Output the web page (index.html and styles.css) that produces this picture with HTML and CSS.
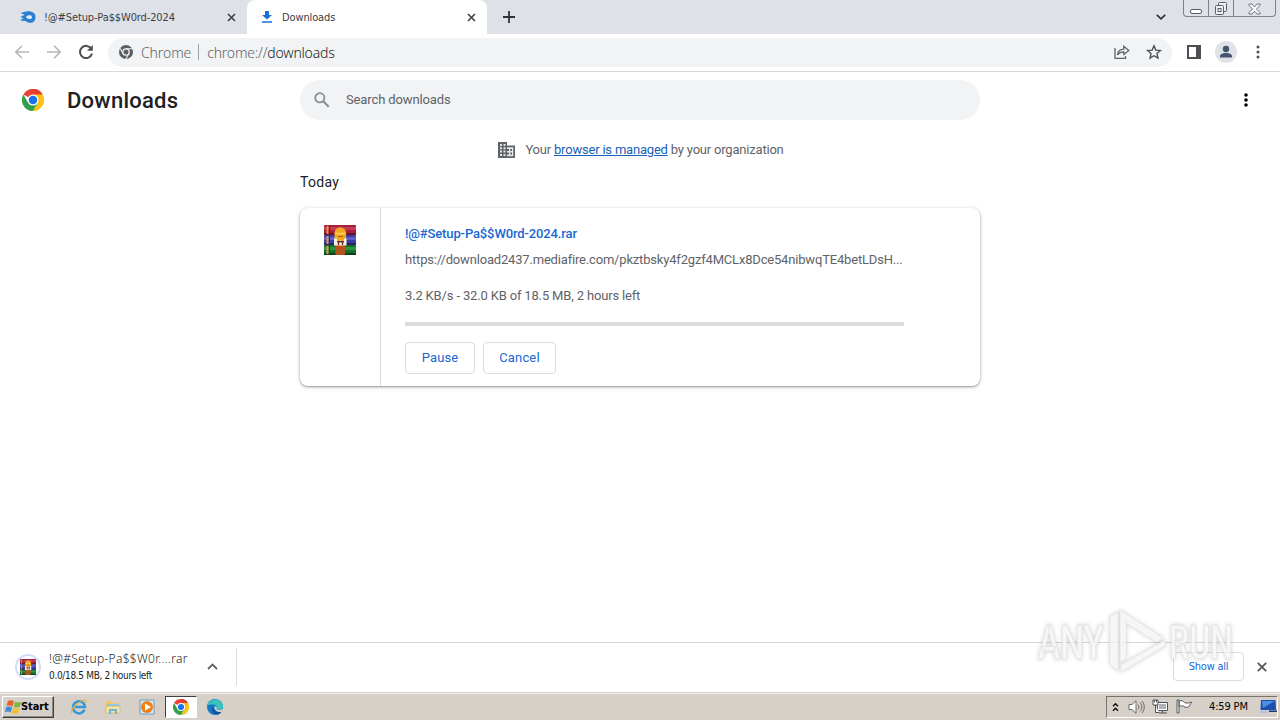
FILE: index.html
```html
<!DOCTYPE html>
<html lang="en">
<head>
    <meta charset="UTF-8">
    <meta name="viewport" content="width=device-width, initial-scale=1.0">
    <title>Downloads</title>
    <link rel="stylesheet" href="styles.css">
</head>
<body>
    <svg class="defs" width="0" height="0">
        <symbol id="chrome" viewBox="0 0 24 24">
            <path d="M12 12 1.6 6A12 12 0 0 1 22.4 6z" fill="#ea4335"/>
            <path d="M12 0a12 12 0 0 1 10.4 6H12z" fill="#e33b2e"/>
            <path d="M12 6h10.4A12 12 0 0 1 12 24l5.2-9z" fill="#fbc116"/>
            <path d="M1.6 6A12 12 0 0 0 12 24l5.2-9L12 12 6.8 15z" fill="#34a048"/>
            <circle cx="12" cy="12" r="6" fill="#fff"/>
            <circle cx="12" cy="12" r="4.6" fill="#1a73e8"/>
        </symbol>
        <symbol id="rar" viewBox="0 0 32 30">
            <rect x="0" y="0" width="32" height="10" rx="1" fill="#a91f3c"/>
            <rect x="0" y="2" width="32" height="3" fill="#c93a5a"/>
            <rect x="0" y="8" width="32" height="2" fill="#671329"/>
            <rect x="0" y="10" width="32" height="10" rx="1" fill="#3c3ca8"/>
            <rect x="0" y="12" width="32" height="3" fill="#5f5dca"/>
            <rect x="0" y="18" width="32" height="2" fill="#26235e"/>
            <rect x="0" y="20" width="32" height="10" rx="1" fill="#16702c"/>
            <rect x="0" y="22" width="32" height="3" fill="#2f9442"/>
            <rect x="0" y="28" width="32" height="2" fill="#0c4519"/>
            <path d="M3.500 1v8M3.500 11v8M3.500 21v8" stroke="#e09a3a" stroke-width="2"/>
            <path d="M5.500 1v28" stroke="#4b2a3c" stroke-width="1"/>
            <rect x="11.500" y="19" width="9.500" height="11" fill="#b4541b"/>
            <path d="M10.500 8a5.800 5.800 0 0 1 11.600 0v8H10.500z" fill="#f2a81d"/>
            <path d="M11 8.500h10.500" stroke="#ffd45a" stroke-width="1.500"/>
            <path d="M14 11.500h5" stroke="#a35c08" stroke-width="1"/>
            <path d="M10 13.500h3v4h7v-4h2.500v7H10z" fill="#f5f0e6"/>
            <path d="M14.500 16v4M18.500 16v4" stroke="#6c2b10" stroke-width="1.300"/>
        </symbol>
    </svg>

    <div class="window">
        <div class="tabstrip">
            <div class="tab">
                <svg class="tab-icon mediafire" width="16" height="12" viewBox="0 0 16 12"><path d="M1 2.500C4-.5 15.500-1.500 15.500 6S8 12.500 5.500 10C3 10 .5 9.500.3 8.200 2 8.500 3 8 3.500 7 2 7.200 1 6.500.6 5.500 3 5.500 3.500 4 4.500 3 3 3.300 2 3 1 2.500z" fill="#2b7fd0"/><path d="M6 6c1-2 6-2.500 6 .2S7.500 8.500 6 6z" fill="#dfeaf6"/></svg>
                <span class="tab-title first-title">!@#Setup-Pa$$W0rd-2024</span>
                <svg class="tab-close" width="9" height="9" viewBox="0 0 9 9"><path d="m1 1 7 7M8 1 1 8"/></svg>
            </div>
            <div class="tab active">
                <svg class="tab-icon" width="12" height="12" viewBox="0 0 12 12"><path d="M4 0h4v4h3L6 8.500 1 4h3zM1 10.300h10v1.500H1z" fill="#1a6fd8"/></svg>
                <span class="tab-title">Downloads</span>
                <svg class="tab-close" width="9" height="9" viewBox="0 0 9 9"><path d="m1 1 7 7M8 1 1 8"/></svg>
            </div>
            <svg class="new-tab" width="12" height="12" viewBox="0 0 12 12"><path d="M6 0v12M0 6h12" stroke="#2f3338" stroke-width="1.800"/></svg>
            <svg class="tab-search" width="10" height="6" viewBox="0 0 10 6"><path d="m.8.800 4.200 4 4.200-4" fill="none" stroke="#2f3338" stroke-width="1.700"/></svg>
            <div class="caption-buttons">
                <span class="cap-min"><svg width="14" height="6" viewBox="0 0 14 6"><rect x="1.500" y="1.500" width="11" height="4" rx="1.500" fill="#fff" stroke="#5a5f66"/></svg></span>
                <span class="cap-max"><svg width="14" height="14" viewBox="0 0 14 14" fill="#eef0f3" stroke="#5a5f66"><rect x="4.500" y=".5" width="8" height="9" rx="1"/><rect x="1.500" y="3.500" width="8" height="9" rx="1"/><rect x="4" y="6.500" width="3" height="3"/></svg></span>
                <span class="cap-close"><svg width="13" height="12" viewBox="0 0 13 12"><path d="M1 1h3l2.500 2.800L9 1h3v1.500L8.500 6 12 9.500V11H9L6.500 8.200 4 11H1V9.500L4.500 6 1 2.500z" fill="#f7f8fa" stroke="#63686f" stroke-width=".9"/></svg></span>
            </div>
        </div>

        <div class="toolbar">
            <svg class="nav-icon disabled" width="16" height="16" viewBox="0 0 16 16"><path d="M15 8H2M8 1.800 1.800 8 8 14.200"/></svg>
            <svg class="nav-icon disabled" width="16" height="16" viewBox="0 0 16 16"><path d="M1 8h13M8 1.800 14.200 8 8 14.200"/></svg>
            <svg class="nav-icon" width="16" height="16" viewBox="0 0 16 16"><path d="M13.300 4.800A6.100 6.100 0 1 0 14 9.500" stroke-width="2"/><path d="M14.800 1v5.800H9z" fill="#4c5054" stroke="none"/></svg>
            <div class="omnibox">
                <svg width="14" height="14" viewBox="0 0 14 14"><circle cx="7" cy="7" r="7" fill="#5a5e63"/><circle cx="7" cy="7" r="3.200" fill="#5a5e63" stroke="#f1f3f4" stroke-width="1.300"/><path d="M7 3.700h6.300M4.200 8.700 1 3.300M9.900 8.600 6.800 14" stroke="#f1f3f4" stroke-width="1.100"/></svg>
                <span class="chip">Chrome</span>
                <span class="divider"></span>
                <span class="url">chrome://<b>downloads</b></span>
                <svg class="share" width="16" height="14" viewBox="0 0 16 14" fill="none" stroke="#5f6368" stroke-width="1.300"><path d="M1 3v10.300h10.500V11"/><path d="M3.500 9.800C4 6 6.500 4.200 9.800 4.200V1.300L14.800 5.500l-5 4V6.800C7 6.800 5 7.700 3.500 9.800z"/></svg>
                <svg class="star" width="16" height="16" viewBox="0 0 16 16"><path d="m8 1.800 1.800 4.300 4.700.4-3.500 3.100 1 4.500L8 11.700l-4 2.400 1-4.500-3.500-3.100 4.700-.4z" fill="none" stroke="#4c5054" stroke-width="1.400"/></svg>
            </div>
            <svg class="side-panel" width="14" height="14" viewBox="0 0 14 14"><path d="M1 1h12v12H1z" fill="none" stroke="#4c5054" stroke-width="2"/><path d="M9 0h5v14H9z" fill="#4c5054"/></svg>
            <svg class="avatar" width="22" height="22" viewBox="0 0 22 22"><circle cx="11" cy="11" r="11" fill="#dfe2e6"/><circle cx="11" cy="8" r="3.200" fill="#45546e"/><path d="M5 16.500v-1.300c0-2 3-3.200 6-3.200s6 1.200 6 3.200v1.300z" fill="#45546e"/></svg>
            <svg class="menu-dots" width="4" height="14" viewBox="0 0 4 14"><circle cx="2" cy="2" r="1.500"/><circle cx="2" cy="7" r="1.500"/><circle cx="2" cy="12" r="1.500"/></svg>
        </div>

        <main class="page">
            <header class="page-header">
                <svg class="logo" width="24" height="24" viewBox="-1 -1 26 26"><use href="#chrome" width="24" height="24"/></svg>
                <h1>Downloads</h1>
                <div class="search">
                    <svg width="16" height="16" viewBox="0 0 16 16" fill="none" stroke="#898e93"><circle cx="5.800" cy="5.800" r="4.600" stroke-width="1.800"/><path d="m9.300 9.300 5.400 5.400" stroke-width="2"/></svg>
                    <span>Search downloads</span>
                </div>
                <svg class="more" width="4" height="14" viewBox="0 0 4 14"><circle cx="2" cy="2" r="1.800"/><circle cx="2" cy="7" r="1.800"/><circle cx="2" cy="12" r="1.800"/></svg>
            </header>

            <div class="managed">
                <svg width="17" height="16" viewBox="0 0 17 16"><path d="M0 0h9v3.500h8V16H0z" fill="#5f6368"/><path d="M2 2h2v2H2zM5.500 2h2v2h-2zM2 5.300h2v2H2zM5.500 5.300h2v2h-2zM2 8.600h2v2H2zM5.500 8.600h2v2h-2zM2 12h2v2H2zM5.500 12h2v2h-2zM9 5.200h6.300v9H9z" fill="#e4e5e6"/><path d="M9 7h2v2H9zM12.300 7h1.700v2h-1.700zM9 10.500h2v2H9zM12.300 10.500h1.700v2h-1.700z" fill="#5f6368"/></svg>
                <span>Your <a href="#">browser is managed</a> by your organization</span>
            </div>

            <section class="downloads">
                <h2>Today</h2>
                <div class="card">
                    <div class="card-icon"><svg width="32" height="30"><use href="#rar"/></svg></div>
                    <div class="details">
                        <a class="file-name" href="#">!@#Setup-Pa$$W0rd-2024.rar</a>
                        <div class="source">https://download2437.mediafire.com/pkztbsky4f2gzf4MCLx8Dce54nibwqTE4betLDsH...</div>
                        <div class="status">3.2 KB/s - 32.0 KB of 18.5 MB, 2 hours left</div>
                        <div class="progress"></div>
                        <div class="actions">
                            <button class="pause">Pause</button>
                            <button class="cancel">Cancel</button>
                        </div>
                    </div>
                </div>
            </section>
        </main>

        <footer class="shelf">
            <div class="shelf-ring"><svg width="16" height="16" viewBox="0 0 32 30" preserveAspectRatio="none"><use href="#rar" width="32" height="30"/></svg></div>
            <div class="shelf-text">
                <span class="shelf-name">!@#Setup-Pa$$W0r....rar</span>
                <span class="shelf-status">0.0/18.5 MB, 2 hours left</span>
            </div>
            <svg class="shelf-up" width="11" height="7" viewBox="0 0 11 7"><path d="m1 6 4.500-4.500L10 6" fill="none" stroke="#5f6368" stroke-width="1.800"/></svg>
            <span class="shelf-divider"></span>
            <button class="show-all">Show all</button>
            <svg class="shelf-close" width="10" height="10" viewBox="0 0 10 10"><path d="m.8.800 8.400 8.400M9.200.8.800 9.200" stroke="#54585c" stroke-width="1.800"/></svg>
        </footer>

        <div class="taskbar">
            <div class="start">
                <svg width="17" height="16" viewBox="0 0 17 16"><path d="M3 2c2-1 4-1 6 .2L7.500 7.500C5.500 6.300 3.800 6.300 1.500 7z" fill="#e8622a"/><path d="M10 2.700c2 1 4 1 6.500 0l-1.700 5c-2.300 1-4 1-6 .2z" fill="#7ab648"/><path d="M1.200 8c2.200-.8 4-.7 6 .4L5.700 13.500c-2-1.200-3.700-1.200-6 -.3z" fill="#3e8bd6"/><path d="M8.400 9c2 .9 4 .9 6.200 0L13 14c-2.500 1.200-4 1-6.200 0z" fill="#f4bd29"/></svg>
                <b>Start</b>
            </div>
            <svg class="task" width="18" height="18" viewBox="0 0 18 18"><path d="M14.500 11.800A6 6 0 1 1 15 9H5" fill="none" stroke="#3199d9" stroke-width="2.500"/><path d="M2 15.500C-1 13 8 2.500 15 2c2 .2 1.500 2 .8 3" fill="none" stroke="#e2b43f" stroke-width="1.200"/></svg>
            <svg class="task" width="18" height="18" viewBox="0 0 18 18"><path d="M2 3h5l1 2h6v10H2z" fill="#e9c96c"/><path d="M3 6h12v3H3z" fill="#8ccbea"/><path d="M2 8h14v7H2z" fill="#f6e3a0" stroke="#c7a95a" stroke-width=".6"/><path d="M5 16v-5h8v5h-2v-3H7v3z" fill="#69b4dc"/></svg>
            <svg class="task" width="18" height="18" viewBox="0 0 18 18"><path d="M2 2h14v14H2z" fill="#d7eaf7" stroke="#6b9cc2"/><circle cx="9" cy="9" r="6" fill="#ee8213"/><path d="M7 5.500 13 9l-6 3.500z" fill="#fff"/></svg>
            <div class="task-active"><svg width="16" height="16"><use href="#chrome"/></svg></div>
            <svg class="task edge" width="18" height="18" viewBox="0 0 18 18"><circle cx="9" cy="9" r="8" fill="#1577c6"/><path d="M1.200 7.500C3 0 15-1 17 7.500c.5 4-4 5-6.500 3.700 1-1.700.7-4.700-3.700-4.700-2.600 0-4.800.4-5.600 1z" fill="#37c4bd"/><path d="M7 8.500c-1 3 2.500 6.500 8.300 5.500-.8 1.300-2 2-3 2.500C7 17 4 11 7 8.500z" fill="#124f95"/><path d="M8.500 9c.5-1.500 3.200-1 2 2.200 2 1.200 4.500 1 6.300-.6-.2 2-1 2.900-1.500 3.400-4 .5-7-2-6.800-5z" fill="#d6d2ca"/></svg>
            <div class="tray">
                <svg class="tray-up" width="7" height="10" viewBox="0 0 7 10"><path d="m1 4.200 2.500-2.500L6 4.200M1 8.700l2.500-2.500L6 8.700" fill="none" stroke="#111" stroke-width="1.500"/></svg>
                <svg width="17" height="14" viewBox="0 0 17 14" fill="none" stroke="#66686a"><path d="M1 4.500h3l4-3.800v12.600L4 9.500H1z" fill="#fff"/><path d="M10 4.500c1.300 1.500 1.300 3.500 0 5M12 2.500c2.500 2.500 2.500 6.500 0 9M14 1c3 3.500 3 8.500 0 12"/></svg>
                <svg width="17" height="15" viewBox="0 0 17 15" fill="#fff" stroke="#4f5254"><path d="M5.500 3.500h10v8h-10z" /><path d="M7 5h7v5H7z" fill="#aeb2b6" stroke="none"/><path d="M7 14h8M10.500 12v2M1 1h5v5H1zM3.500 6v7.500H7M2.500 1v2.500M4.500 1v2.500"/></svg>
                <svg width="17" height="15" viewBox="0 0 17 15"><path d="M1 1h2v13H1zM3 2c3-1 4 0 5.500 1.500 2 .9 4 .9 7-.5-1 2-2 4-3 5-2 .7-3 .5-4.500-.5C6 6.500 5 6.500 3 7.500z" fill="#fff" stroke="#55585a"/></svg>
                <span class="clock">4:59 PM</span>
                <svg width="17" height="13" viewBox="0 0 17 13"><path d="M1 0h14.500l.5 10H.5z" fill="#1d4fae"/><path d="M2 1h12.500L3 8z" fill="#4c91e4"/><path d="M0 11h8v2H0z" fill="#a9c6e8"/><path d="M9 10.500h8V12H9z" fill="#173777"/></svg>
            </div>
        </div>

        <svg class="watermark" width="206" height="74" viewBox="0 0 206 74">
            <g class="mark">
                <text x="5" y="54" textLength="66" lengthAdjust="spacingAndGlyphs">ANY</text>
                <text x="136" y="54" textLength="64" lengthAdjust="spacingAndGlyphs">RUN</text>
                <path d="M77 12v47l8 7V7z"/>
                <path d="M87 5v52l6-4V18l31 19 6-4z"/>
                <path d="M88 60v7l44-26v-6z"/>
            </g>
        </svg>
    </div>
</body>
</html>
```
FILE: styles.css
```css
* {
    box-sizing: border-box;
}
body {
    margin: 0;
    overflow: hidden;
    background: #fff;
    font-family: Roboto, sans-serif;
    color: #202124;
}
svg {
    display: block;
    flex: none;
}
.defs {
    position: absolute;
}
.window {
    position: relative;
    display: flex;
    flex-direction: column;
    width: 1280px;
    height: 720px;
}
button {
    background: #fff;
    border: 1px solid #dadce0;
    border-radius: 4px;
    padding: 0;
    color: #1967d2;
    white-space: nowrap;
}

/* tabs */
.tabstrip {
    display: flex;
    align-items: center;
    height: 34px;
    background: #dee1e8;
    font-family: "DejaVu Sans Condensed", "DejaVu Sans", sans-serif;
    font-stretch: condensed;
}
.tab {
    display: flex;
    align-items: center;
    width: 247px;
    height: 34px;
    padding: 0 11px 0 20px;
}
.tab.active {
    width: 240px;
    padding-left: 14px;
    background: #fff;
    border-radius: 8px 8px 0 0;
}
.tab-title {
    flex: 1;
    margin-left: 9px;
    font-size: 11px;
    letter-spacing: -0.13px;
    color: #3c4043;
    white-space: nowrap;
}
.first-title {
    margin-left: 8px;
}
.tab-close path {
    stroke: #3c4043;
    stroke-width: 1.6;
}
.new-tab {
    margin-left: 16px;
}
.tab-search {
    margin-left: auto;
}
.caption-buttons {
    display: flex;
    align-self: flex-start;
    width: 93px;
    height: 17px;
    margin: 0 4px 0 17px;
    border: 1px solid #7c828b;
    border-top: 0;
    border-radius: 0 0 4px 4px;
}
.caption-buttons span {
    display: flex;
    justify-content: center;
    align-items: center;
    width: 25px;
    padding-top: 1px;
    border-right: 1px solid #7c828b;
}
.caption-buttons .cap-min {
    padding-top: 5px;
}
.caption-buttons .cap-close {
    flex: 1;
    border: 0;
}

/* toolbar */
.toolbar {
    display: flex;
    align-items: center;
    height: 38px;
    padding: 0 20px 1px 14px;
    border-bottom: 1px solid #d5d8dc;
}
.nav-icon {
    margin-right: 16px;
    fill: none;
    stroke: #4c5054;
    stroke-width: 1.6;
}
.nav-icon.disabled {
    stroke: #b4b6b9;
}
.omnibox {
    display: flex;
    align-items: center;
    width: 1064px;
    height: 29px;
    margin-left: -2px;
    padding: 0 10px 0 11px;
    border-radius: 15px;
    background: #f1f3f4;
    font-family: "Noto Sans", sans-serif;
    font-size: 14px;
    font-weight: 300;
    letter-spacing: -0.2px;
    color: #5f6368;
}
.chip {
    margin-left: 8px;
    letter-spacing: -0.1px;
}
.divider {
    width: 1px;
    height: 16px;
    margin: 0 8px 0 7px;
    background: #9aa0a6;
}
.url b {
    font-weight: 300;
    color: #202124;
}
.share {
    margin-left: auto;
}
.star {
    margin-left: 16px;
}
.side-panel {
    margin-left: 15px;
}
.avatar {
    margin-left: 14px;
}
.menu-dots {
    margin-left: auto;
    fill: #4c5054;
}

/* page */
.page {
    flex: 1;
}
.page-header {
    display: flex;
    align-items: center;
    height: 56px;
    padding: 0 32px 0 21px;
}
h1 {
    width: 233px;
    margin: 0 0 0 22px;
    font-size: 22px;
    font-weight: 500;
    letter-spacing: 0.25px;
}
.search {
    display: flex;
    align-items: center;
    width: 680px;
    height: 40px;
    padding-left: 14px;
    border-radius: 20px;
    background: #f1f3f4;
    font-size: 13px;
    letter-spacing: -0.12px;
    color: #5f6368;
}
.search span {
    margin-left: 16px;
    padding-bottom: 2px;
}
.more {
    margin-left: auto;
}
.managed {
    display: flex;
    justify-content: center;
    align-items: center;
    height: 44px;
    padding-left: 2px;
    font-size: 13px;
    letter-spacing: -0.2px;
    color: #5f6368;
}
.managed span {
    padding-bottom: 2px;
}
.managed svg {
    margin-right: 10px;
}
.managed a {
    color: #1a5fb8;
}
.downloads {
    width: 680px;
    margin: 0 auto;
}
h2 {
    height: 36px;
    margin: 0;
    font-size: 14px;
    font-weight: 400;
    line-height: 20px;
    letter-spacing: 0.3px;
}
.card {
    display: flex;
    height: 178px;
    border-radius: 8px;
    box-shadow: 0 1px 2px rgba(60, 64, 67, 0.45), 0 1px 5px rgba(60, 64, 67, 0.2);
}
.card-icon {
    display: flex;
    justify-content: center;
    width: 81px;
    padding-top: 17px;
    border-right: 1px solid #d5d8dc;
}
.details {
    width: 523px;
    padding: 16px 0 0 24px;
    font-size: 13px;
    line-height: 20px;
    color: #5f6368;
    white-space: nowrap;
}
.file-name {
    display: block;
    font-weight: 500;
    letter-spacing: -0.13px;
    color: #1967d2;
    text-decoration: none;
}
.source {
    margin-top: 6px;
    letter-spacing: -0.18px;
}
.status {
    margin-top: 16px;
    letter-spacing: -0.16px;
}
.progress {
    height: 4px;
    margin-top: 16px;
    background: #dcdcdc;
}
.actions {
    display: flex;
    gap: 8px;
    margin-top: 16px;
}
.actions button {
    height: 32px;
    padding-bottom: 1px;
    font: 400 13px Roboto, sans-serif;
    letter-spacing: 0.15px;
}
.pause {
    width: 70px;
}
.cancel {
    width: 73px;
}

/* download shelf */
.shelf {
    display: flex;
    align-items: center;
    height: 50px;
    padding: 0 13px 2px 15px;
    border-top: 1px solid #d5d8dc;
    font-family: "DejaVu Sans Condensed", "DejaVu Sans", sans-serif;
    font-stretch: condensed;
}
.shelf-ring {
    display: flex;
    justify-content: center;
    align-items: center;
    width: 26px;
    height: 26px;
    border: 2px solid #cfdcf4;
    border-radius: 50%;
}
.shelf-text {
    display: flex;
    flex-direction: column;
    width: 159px;
    padding-left: 8px;
    white-space: nowrap;
}
.shelf-name {
    font-family: "Noto Sans", sans-serif;
    font-size: 12px;
    font-weight: 300;
    line-height: 17px;
    letter-spacing: 0.3px;
}
.shelf-status {
    font-size: 10px;
    line-height: 17px;
    letter-spacing: -0.33px;
}
.shelf-up {
    margin-left: 7px;
}
.shelf-divider {
    width: 1px;
    height: 38px;
    margin-left: 18px;
    background: #dadce0;
}
.show-all {
    width: 71px;
    height: 29px;
    margin-left: auto;
    padding-bottom: 1px;
    font-family: inherit;
    font-stretch: condensed;
    font-size: 11px;
    letter-spacing: -0.25px;
}
.shelf-close {
    margin-left: 13px;
}

/* taskbar */
.taskbar {
    display: flex;
    align-items: center;
    height: 28px;
    padding: 0 0 0 2px;
    background: #d6d0c8;
    border-top: 1px solid #d6d0c8;
    box-shadow: inset 0 1px #f4f2ee;
    font-family: "DejaVu Sans Condensed", "DejaVu Sans", sans-serif;
    font-stretch: condensed;
}
.start {
    display: flex;
    align-items: center;
    width: 52px;
    height: 22px;
    padding-left: 2px;
    border: 1px solid;
    border-color: #fff #404040 #404040 #fff;
    box-shadow: inset -1px -1px #8c8881;
    font-size: 11px;
    color: #000;
}
.start b {
    margin-left: -1px;
    letter-spacing: -0.1px;
}
.task {
    margin-left: 16px;
}
.start + .task {
    margin-left: 16px;
}
.task-active {
    display: flex;
    justify-content: center;
    align-items: center;
    width: 32px;
    height: 22px;
    margin-left: 9px;
    background: #fff;
    border: 1px solid;
    border-color: #404040 #fff #fff #404040;
}
.task.edge {
    margin-left: 9px;
}
.tray {
    display: flex;
    align-items: center;
    gap: 7px;
    width: 172px;
    height: 22px;
    margin: 0 2px 0 auto;
    padding-left: 5px;
    border: 1px solid;
    border-color: #77736c #fff #fff #77736c;
    font-size: 11px;
    color: #000;
}
.tray-up {
    margin-right: 2px;
}
.clock {
    width: 44px;
    margin-left: 9px;
    letter-spacing: -0.15px;
    white-space: nowrap;
}

.watermark {
    position: absolute;
    left: 1033px;
    top: 605px;
    filter: drop-shadow(0 0 2px rgba(0, 0, 0, 0.22));
}
.mark {
    fill: rgba(255, 255, 255, 0.75);
    stroke: #e4e4e4;
    stroke-width: 0.8;
    font: 500 48px Roboto, sans-serif;
}
```
